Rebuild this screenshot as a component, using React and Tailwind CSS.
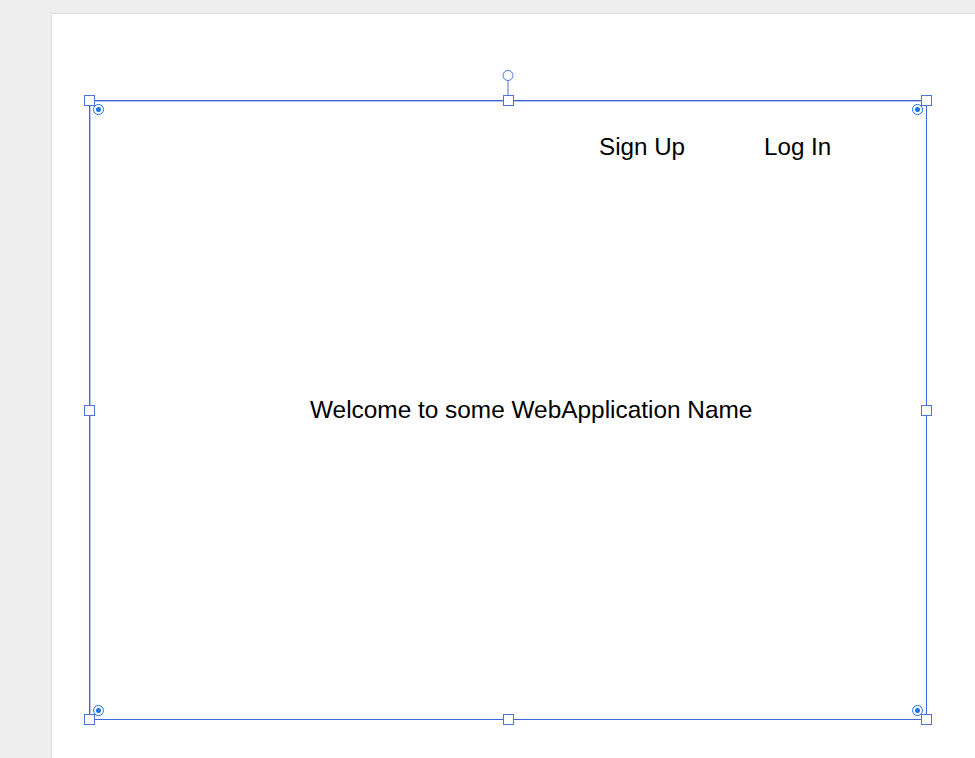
import React from 'react';

// resize handle on the selection outline
const Handle = () => (
  <div className="w-[11px] h-[11px] bg-white border border-[#4f73de]" />
);

// corner radius handle (ring with dot)
const RadiusDot = () => (
  <div className="w-[11px] h-[11px] rounded-full border-[1.5px] border-[#1a73e8] bg-white flex items-center justify-center">
    <div className="w-[5px] h-[5px] rounded-full bg-[#1a73e8]" />
  </div>
);

export default function App() {
  return (
    <div className="w-[975px] h-[758px] bg-[#eeeeee] overflow-hidden font-['Liberation_Sans',Arial,sans-serif] pl-[51px] pt-[13px]">
      {/* Paper */}
      <div className="w-[1000px] h-[800px] bg-white border border-[#e0e0e0] pl-[37px] pt-[86px]">
        {/* Selected shape */}
        <div className="relative w-[838px] h-[620px] border border-[#3f66da] shadow-[inset_1px_1px_0_#b7c6f1]">
          {/* Text on the canvas */}
          <div className="absolute left-[509px] top-[32px] text-[24.2px] leading-[28px] text-black">Sign Up</div>
          <div className="absolute left-[674px] top-[32px] text-[24.2px] leading-[28px] text-black">Log In</div>
          <div className="absolute left-[220px] top-[295px] text-[24.4px] leading-[28px] text-black">
            Welcome to some WebApplication Name
          </div>

          {/* Rotation handle */}
          <div className="absolute left-1/2 -translate-x-1/2 -top-[31px] flex flex-col items-center">
            <div className="w-[11px] h-[11px] rounded-full bg-white border border-[#4f73de]" />
            <div className="w-px h-[20px] bg-[#4f73de]" />
          </div>

          {/* Resize handles */}
          <div className="absolute -inset-[6px] flex flex-col justify-between">
            <div className="flex justify-between">
              <Handle />
              <Handle />
              <Handle />
            </div>
            <div className="flex justify-between">
              <Handle />
              <Handle />
            </div>
            <div className="flex justify-between">
              <Handle />
              <Handle />
              <Handle />
            </div>
          </div>

          {/* Corner radius handles */}
          <div className="absolute inset-[3px] flex flex-col justify-between">
            <div className="flex justify-between">
              <RadiusDot />
              <RadiusDot />
            </div>
            <div className="flex justify-between">
              <RadiusDot />
              <RadiusDot />
            </div>
          </div>
        </div>
      </div>
    </div>
  );
}
